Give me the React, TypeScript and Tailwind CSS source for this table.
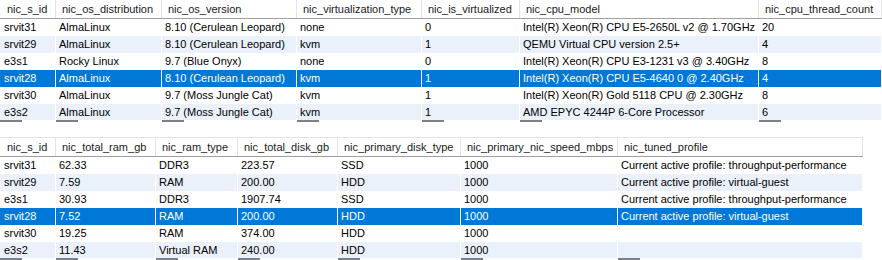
const topCols = [56, 106, 135, 125, 98, 239, 123];
const topHeaders = [
  "nic_s_id",
  "nic_os_distribution",
  "nic_os_version",
  "nic_virtualization_type",
  "nic_is_virtualized",
  "nic_cpu_model",
  "nic_cpu_thread_count",
];
const topRows = [
  ["srvit31", "AlmaLinux", "8.10 (Cerulean Leopard)", "none", "0", "Intel(R) Xeon(R) CPU E5-2650L v2 @ 1.70GHz", "20"],
  ["srvit29", "AlmaLinux", "8.10 (Cerulean Leopard)", "kvm", "1", "QEMU Virtual CPU version 2.5+", "4"],
  ["e3s1", "Rocky Linux", "9.7 (Blue Onyx)", "none", "0", "Intel(R) Xeon(R) CPU E3-1231 v3 @ 3.40GHz", "8"],
  ["srvit28", "AlmaLinux", "8.10 (Cerulean Leopard)", "kvm", "1", "Intel(R) Xeon(R) CPU E5-4640 0 @ 2.40GHz", "4"],
  ["srvit30", "AlmaLinux", "9.7 (Moss Jungle Cat)", "kvm", "1", "Intel(R) Xeon(R) Gold 5118 CPU @ 2.30GHz", "8"],
  ["e3s2", "AlmaLinux", "9.7 (Moss Jungle Cat)", "kvm", "1", "AMD EPYC 4244P 6-Core Processor", "6"],
];

const botCols = [56, 100, 82, 100, 123, 157, 245];
const botHeaders = [
  "nic_s_id",
  "nic_total_ram_gb",
  "nic_ram_type",
  "nic_total_disk_gb",
  "nic_primary_disk_type",
  "nic_primary_nic_speed_mbps",
  "nic_tuned_profile",
];
const botRows = [
  ["srvit31", "62.33", "DDR3", "223.57", "SSD", "1000", "Current active profile: throughput-performance"],
  ["srvit29", "7.59", "RAM", "200.00", "HDD", "1000", "Current active profile: virtual-guest"],
  ["e3s1", "30.93", "DDR3", "1907.74", "SSD", "1000", "Current active profile: throughput-performance"],
  ["srvit28", "7.52", "RAM", "200.00", "HDD", "1000", "Current active profile: virtual-guest"],
  ["srvit30", "19.25", "RAM", "374.00", "HDD", "1000", ""],
  ["e3s2", "11.43", "Virtual RAM", "240.00", "HDD", "1000", ""],
];

const SELECTED = 3;

function Grid({
  cols,
  headers,
  rows,
}: {
  cols: number[];
  headers: string[];
  rows: string[][];
}) {
  return (
    <div className="flex flex-col">
      <div className="h-[120px] overflow-hidden">
        {/* Header */}
        <div className="flex h-[19px] border-b border-[#a0a0a0] bg-white">
          {headers.map((h, i) => (
            <div
              key={h}
              style={{ width: cols[i] }}
              className={`shrink-0 flex items-center border-r border-[#e3e3e3] text-[11px] text-[#1a1a1a] whitespace-nowrap overflow-hidden ${
                i === 0 ? "pl-[7px]" : "pl-[6px]"
              }`}
            >
              {h}
            </div>
          ))}
        </div>

        {/* Rows */}
        {rows.map((row, r) => {
          const selected = r === SELECTED;
          const bg = selected
            ? "bg-[#0078d7] text-white"
            : r % 2 === 1
            ? "bg-[#eaf1fb] text-black"
            : "bg-white text-black";
          return (
            <div key={r} className="flex h-[17px]">
              {row.map((cell, i) => (
                <div
                  key={i}
                  style={{ width: cols[i] }}
                  className={`shrink-0 flex items-center border-r border-white text-[11px] whitespace-nowrap overflow-hidden ${bg} ${
                    i === 0 ? "pl-[4px]" : "pl-[3px]"
                  }`}
                >
                  {cell}
                </div>
              ))}
            </div>
          );
        })}
      </div>

      {/* Column scroll markers */}
      <div className="flex h-[2px]">
        {cols.map((w, i) => (
          <div key={i} style={{ width: w }} className="shrink-0">
            <div className="h-[2px] w-[22px] bg-[#808080]" />
          </div>
        ))}
      </div>
    </div>
  );
}

export default function App() {
  return (
    <div
      className="w-[882px] h-[260px] bg-white overflow-hidden"
      style={{ fontFamily: '"Liberation Sans", Arial, sans-serif' }}
    >
      <Grid cols={topCols} headers={topHeaders} rows={topRows} />
      <div className="h-[15px]" />
      <div className="w-[863px] border-t border-[#e3e3e3]">
        <Grid cols={botCols} headers={botHeaders} rows={botRows} />
      </div>
    </div>
  );
}
